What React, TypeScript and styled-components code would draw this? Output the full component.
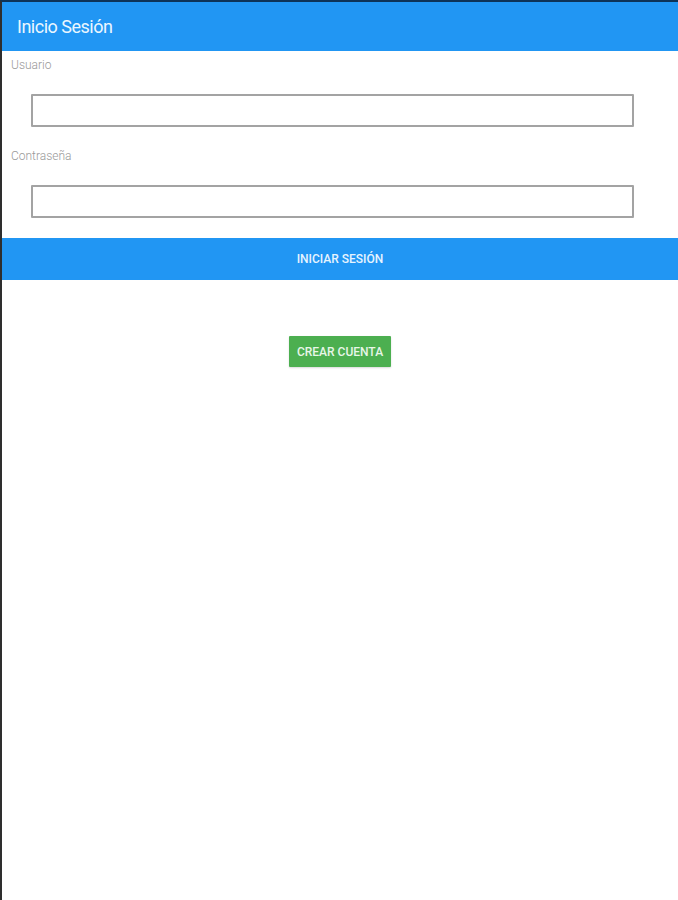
import React, { useState } from 'react';
import styled, { createGlobalStyle } from 'styled-components';

const GlobalStyle = createGlobalStyle`
  html, body {
    margin: 0;
    padding: 0;
    background: #ffffff;
  }
  body {
    font-family: Roboto, 'Liberation Sans', sans-serif;
  }
`;

const App = (): JSX.Element => {
  const [user, setUser] = useState('');
  const [pass, setPass] = useState('');
  return (
    <>
      <GlobalStyle />
      <Frame>
        <Header>
          <Title>Inicio Sesión</Title>
        </Header>
        <Form>
          <Label>Usuario</Label>
          <FieldWrap>
            <Input value={user} onChange={(e) => setUser(e.target.value)} />
          </FieldWrap>
          <Label $spaced>Contraseña</Label>
          <FieldWrap>
            <Input type="password" value={pass} onChange={(e) => setPass(e.target.value)} />
          </FieldWrap>
        </Form>
        <LoginButton>INICIAR SESIÓN</LoginButton>
        <Actions>
          <CreateButton>CREAR CUENTA</CreateButton>
        </Actions>
      </Frame>
    </>
  );
};

export default App;

const Frame = styled.div`
  box-sizing: border-box;
  width: 678px;
  height: 900px;
  border-top: 2px solid #0d3358;
  border-left: 2px solid #2e2e2e;
  background: #ffffff;
  display: flex;
  flex-direction: column;
`;

const Header = styled.header`
  height: 49px;
  background: #2196f3;
  display: flex;
  align-items: center;
  padding-left: 15px;
`;

const Title = styled.h1`
  margin: 0;
  font-family: Roboto, 'Liberation Sans', sans-serif;
  font-weight: 400;
  font-size: 18px;
  color: #eaf6ff;
  letter-spacing: -0.5px;
`;

const Form = styled.div`
  display: flex;
  flex-direction: column;
  padding-top: 8px;
`;

const Label = styled.label<{ $spaced?: boolean }>`
  font-size: 12px;
  font-weight: 300;
  color: #999999;
  padding-left: 9px;
  height: 15px;
  line-height: 13px;
  margin-top: ${({ $spaced }) => ($spaced ? '3px' : '0')};
`;

const FieldWrap = styled.div`
  padding: 20px 44px 20px 29px;
`;

const Input = styled.input`
  box-sizing: border-box;
  width: 100%;
  height: 33px;
  border: 2px solid #a3a3a3;
  border-radius: 1px;
  background: #ffffff;
  outline: none;
  font-size: 14px;
  padding: 0 6px;
`;

const LoginButton = styled.button`
  height: 42px;
  border: none;
  background: #2196f3;
  color: #e6f4ff;
  font-family: Roboto, 'Liberation Sans', sans-serif;
  font-size: 12px;
  font-weight: 500;
  cursor: pointer;
`;

const Actions = styled.div`
  display: flex;
  justify-content: center;
  padding-top: 56px;
`;

const CreateButton = styled.button`
  width: 102px;
  height: 31px;
  border: none;
  border-radius: 1px;
  background: #4caf50;
  color: #e8f6e8;
  font-family: Roboto, 'Liberation Sans', sans-serif;
  font-size: 12px;
  font-weight: 500;
  cursor: pointer;
  box-shadow: 0 1px 2px rgba(0, 0, 0, 0.15);
`;
